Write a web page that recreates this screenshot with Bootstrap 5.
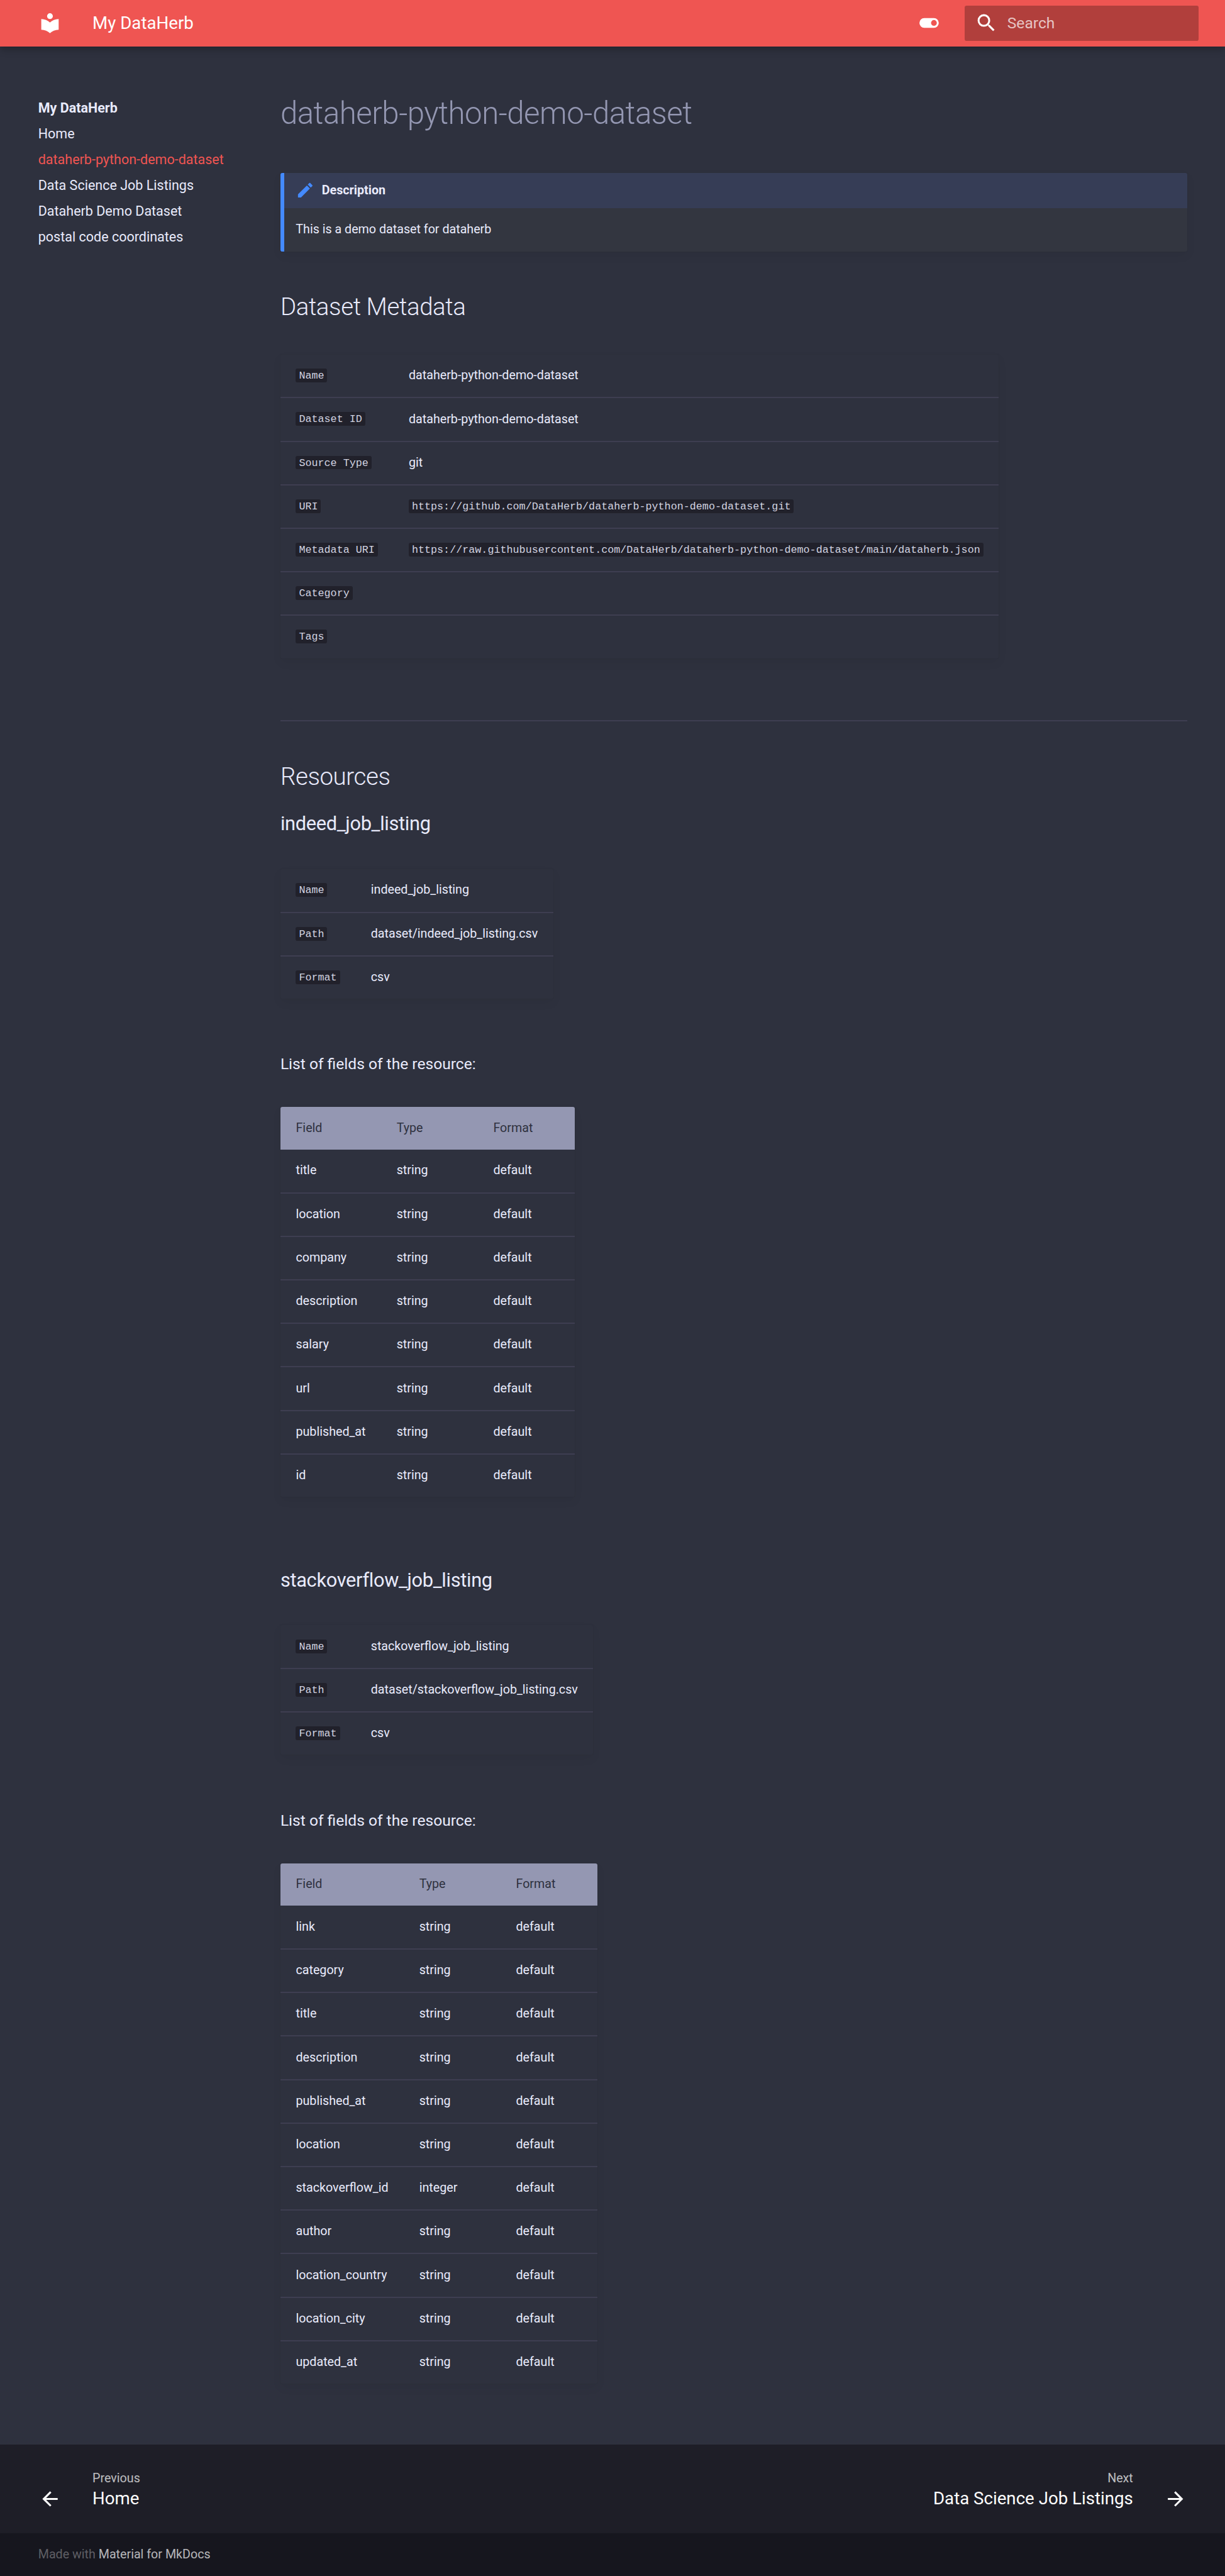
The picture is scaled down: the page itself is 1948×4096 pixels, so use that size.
<!DOCTYPE html>
<html lang="en">
<head>
<meta charset="utf-8">
<title>dataherb-python-demo-dataset - My DataHerb</title>
<link rel="stylesheet" href="https://cdn.jsdelivr.net/npm/bootstrap@5.3.0/dist/css/bootstrap.min.css">
<style>
html{font-size:30.75px}
body{font-family:Roboto,"Liberation Sans",sans-serif;font-size:.8rem;line-height:1.6;background:#2e313e;color:#e9ebfc;min-height:4096px;-webkit-font-smoothing:antialiased}
a{color:inherit;text-decoration:none}
svg{fill:currentColor;display:block;flex:none}
.ico{width:1.2rem;height:1.2rem}
.topbar{height:2.4rem;background:#ef5552;color:#fff;padding:0 1.36rem 0 1.985rem;box-shadow:0 0 .2rem #0000001a,0 .2rem .4rem #0003;z-index:2;position:relative}
.site-title{font-size:.9rem;line-height:2.4rem;margin-left:1.6rem}
.searchbox{width:12.1rem;height:1.8rem;border-radius:.1rem;background:rgba(0,0,0,.26);margin-left:1.24rem;padding-left:.5rem}
.searchbox input{background:none;border:0;outline:0;padding:0;margin-left:.5rem;font-size:.8rem;color:#fff;width:8rem;line-height:1.8rem}
.searchbox input::placeholder{color:rgba(255,255,255,.7);opacity:1}
.side{width:14.5rem;padding:2.505rem 0 0 1.975rem;font-size:.7rem;line-height:1.3375rem}
.side .active{color:#ef5552}
.article{padding-top:2.45rem;width:46.9rem}
h1,h2,h3,p{margin:0}
h1{font-size:1.6rem;line-height:2.08rem;font-weight:300;letter-spacing:-.01em;color:#9497b2;margin-bottom:2.02rem}
h2{font-size:1.25rem;line-height:1.75rem;font-weight:300;letter-spacing:-.01em}
h3{font-size:1rem;line-height:1.5rem;font-weight:400;letter-spacing:-.01em}
.note{border-left:.2rem solid #448aff;border-radius:.1rem;background:#333640;font-size:.64rem;margin-bottom:2rem;box-shadow:0 .2rem .5rem #0000000d,0 0 .05rem #0000001a;overflow:hidden}
.note-head{height:1.8rem;background:#363d56;padding-left:.6rem;font-weight:700}
.note-head svg{width:1rem;height:1rem;color:#448aff;margin-right:.35rem}
.note-body{height:2.25rem;padding-left:.6rem}
.sheet{width:max-content;border-collapse:separate;border-spacing:0;font-size:.64rem;line-height:1rem;border-radius:.1rem;margin-top:1.585rem;box-shadow:0 .2rem .5rem #0000000d,0 0 .05rem #0000001a;overflow:hidden}
.sheet td,.sheet th{padding:0 .8rem;vertical-align:middle;white-space:nowrap}
.sheet th{height:2.2rem;min-width:5rem;background:#9497b2;color:#2e313e;font-weight:400;text-align:left}
.sheet td{height:2.25rem;border-top:2px solid rgba(66,66,86,.8)}
.sheet tbody tr:first-child td{height:2.2rem;border-top:0}
.sheet code{font-family:"Liberation Mono",monospace;font-size:.85em;letter-spacing:.01px;color:#d1d3e0;background:#21212b;border-radius:.1rem;padding:.13em .2941em .04em}
.rule{height:2px;background:rgba(66,66,86,.8);margin:3.2rem 0 1.98rem}
.lead-in{line-height:1.28rem;margin-top:2.74rem}
.foot-nav{height:4.6rem;background:#1e1e27;color:#fff;padding:0 1.955rem 0 1.985rem}
.foot-nav .dir{font-size:.64rem;line-height:1rem;opacity:.7}
.foot-nav .page{font-size:.9rem;line-height:1.03rem}
.foot-nav .ico{margin-top:1rem}
.foot-meta{height:2.2rem;background:#16161e;color:rgba(255,255,255,.32);padding-left:1.975rem;font-size:.64rem}
.foot-meta a{color:rgba(255,255,255,.7)}
</style>
</head>
<body class="d-flex flex-column">
<header class="topbar d-flex align-items-center">
  <svg class="ico" viewBox="0 0 24 24"><path d="M12 8a3 3 0 0 0 3-3 3 3 0 0 0-3-3 3 3 0 0 0-3 3 3 3 0 0 0 3 3m0 3.54C9.64 9.35 6.5 8 3 8v11c3.5 0 6.64 1.35 9 3.54 2.36-2.19 5.5-3.54 9-3.54V8c-3.5 0-6.64 1.35-9 3.54z"/></svg>
  <span class="site-title">My DataHerb</span>
  <svg class="ico ms-auto" viewBox="0 0 24 24"><path d="M17 7H7a5 5 0 0 0-5 5 5 5 0 0 0 5 5h10a5 5 0 0 0 5-5 5 5 0 0 0-5-5m0 8a3 3 0 0 1-3-3 3 3 0 0 1 3-3 3 3 0 0 1 3 3 3 3 0 0 1-3 3z"/></svg>
  <div class="searchbox d-flex align-items-center">
    <svg class="ico" viewBox="0 0 24 24"><path d="M9.5 3A6.5 6.5 0 0 1 16 9.5c0 1.61-.59 3.09-1.56 4.23l.27.27h.79l5 5-1.5 1.5-5-5v-.79l-.27-.27A6.516 6.516 0 0 1 9.5 16 6.5 6.5 0 0 1 3 9.5 6.5 6.5 0 0 1 9.5 3m0 2C7 5 5 7 5 9.5S7 14 9.5 14 14 12 14 9.5 12 5 9.5 5z"/></svg>
    <input type="text" placeholder="Search">
  </div>
</header>

<div class="d-flex flex-grow-1">
  <nav class="side nav flex-column flex-nowrap flex-shrink-0">
    <strong>My DataHerb</strong>
    <a href="#">Home</a>
    <a href="#" class="active">dataherb-python-demo-dataset</a>
    <a href="#">Data Science Job Listings</a>
    <a href="#">Dataherb Demo Dataset</a>
    <a href="#">postal code coordinates</a>
  </nav>
  <main class="article flex-shrink-0">
    <h1>dataherb-python-demo-dataset</h1>
    <div class="note">
      <div class="note-head d-flex align-items-center">
        <svg viewBox="0 0 24 24"><path d="M20.71 7.04c.39-.39.39-1.04 0-1.41l-2.34-2.34c-.37-.39-1.02-.39-1.41 0l-1.84 1.83 3.75 3.75M3 17.25V21h3.75L17.81 9.93l-3.75-3.75L3 17.25z"/></svg>
        Description
      </div>
      <div class="note-body d-flex align-items-center">This is a demo dataset for dataherb</div>
    </div>

    <h2>Dataset Metadata</h2>
    <table class="sheet"><tbody>
      <tr><td><code>Name</code></td><td>dataherb-python-demo-dataset</td></tr>
      <tr><td><code>Dataset ID</code></td><td>dataherb-python-demo-dataset</td></tr>
      <tr><td><code>Source Type</code></td><td>git</td></tr>
      <tr><td><code>URI</code></td><td><code>https://github.com/DataHerb/dataherb-python-demo-dataset.git</code></td></tr>
      <tr><td><code>Metadata URI</code></td><td><code>https://raw.githubusercontent.com/DataHerb/dataherb-python-demo-dataset/main/dataherb.json</code></td></tr>
      <tr><td><code>Category</code></td><td></td></tr>
      <tr><td><code>Tags</code></td><td></td></tr>
    </tbody></table>

    <div class="rule"></div>

    <h2>Resources</h2>
    <h3 style="margin-top:.83rem">indeed_job_listing</h3>
    <table class="sheet"><tbody>
      <tr><td><code>Name</code></td><td>indeed_job_listing</td></tr>
      <tr><td><code>Path</code></td><td>dataset/indeed_job_listing.csv</td></tr>
      <tr><td><code>Format</code></td><td>csv</td></tr>
    </tbody></table>
    <p class="lead-in">List of fields of the resource:</p>
    <table class="sheet">
      <thead><tr><th>Field</th><th>Type</th><th>Format</th></tr></thead>
      <tbody>
      <tr><td>title</td><td>string</td><td>default</td></tr>
      <tr><td>location</td><td>string</td><td>default</td></tr>
      <tr><td>company</td><td>string</td><td>default</td></tr>
      <tr><td>description</td><td>string</td><td>default</td></tr>
      <tr><td>salary</td><td>string</td><td>default</td></tr>
      <tr><td>url</td><td>string</td><td>default</td></tr>
      <tr><td>published_at</td><td>string</td><td>default</td></tr>
      <tr><td>id</td><td>string</td><td>default</td></tr>
      </tbody>
    </table>

    <h3 style="margin-top:3.565rem">stackoverflow_job_listing</h3>
    <table class="sheet"><tbody>
      <tr><td><code>Name</code></td><td>stackoverflow_job_listing</td></tr>
      <tr><td><code>Path</code></td><td>dataset/stackoverflow_job_listing.csv</td></tr>
      <tr><td><code>Format</code></td><td>csv</td></tr>
    </tbody></table>
    <p class="lead-in">List of fields of the resource:</p>
    <table class="sheet">
      <thead><tr><th>Field</th><th>Type</th><th>Format</th></tr></thead>
      <tbody>
      <tr><td>link</td><td>string</td><td>default</td></tr>
      <tr><td>category</td><td>string</td><td>default</td></tr>
      <tr><td>title</td><td>string</td><td>default</td></tr>
      <tr><td>description</td><td>string</td><td>default</td></tr>
      <tr><td>published_at</td><td>string</td><td>default</td></tr>
      <tr><td>location</td><td>string</td><td>default</td></tr>
      <tr><td>stackoverflow_id</td><td>integer</td><td>default</td></tr>
      <tr><td>author</td><td>string</td><td>default</td></tr>
      <tr><td>location_country</td><td>string</td><td>default</td></tr>
      <tr><td>location_city</td><td>string</td><td>default</td></tr>
      <tr><td>updated_at</td><td>string</td><td>default</td></tr>
      </tbody>
    </table>
  </main>
</div>

<footer>
  <nav class="foot-nav d-flex justify-content-between">
    <a href="#" class="d-flex align-items-center">
      <svg class="ico" viewBox="0 0 24 24"><path d="M20 11v2H8l5.5 5.5-1.42 1.42L4.16 12l7.92-7.92L13.5 5.5 8 11h12z"/></svg>
      <div style="margin-left:1.6rem"><div class="dir">Previous</div><div class="page">Home</div></div>
    </a>
    <a href="#" class="d-flex align-items-center text-end">
      <div style="margin-right:1.6rem"><div class="dir">Next</div><div class="page">Data Science Job Listings</div></div>
      <svg class="ico" viewBox="0 0 24 24"><path d="M4 11v2h12l-5.5 5.5 1.42 1.42L19.84 12l-7.92-7.92L10.5 5.5 16 11H4z"/></svg>
    </a>
  </nav>
  <div class="foot-meta d-flex align-items-center"><div>Made with <a href="#">Material for MkDocs</a></div></div>
</footer>
<script src="https://cdn.jsdelivr.net/npm/bootstrap@5.3.0/dist/js/bootstrap.bundle.min.js"></script>
</body>
</html>
